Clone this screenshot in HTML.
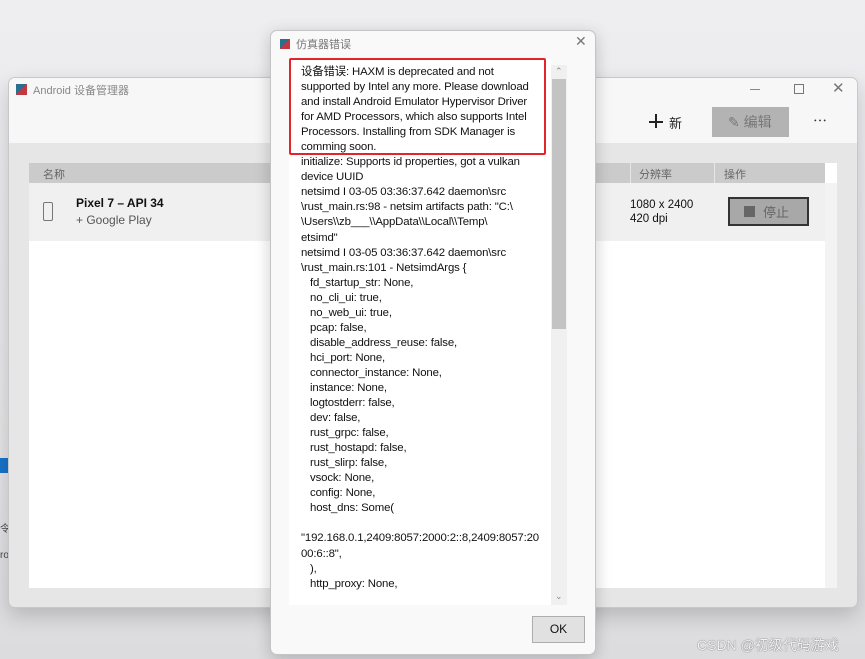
<!DOCTYPE html>
<html><head><meta charset="utf-8"><style>
*{margin:0;padding:0;box-sizing:border-box}
body{width:865px;height:659px;overflow:hidden;background:linear-gradient(#eeeef1,#e6e6e8 60%,#dcdcdf);font-family:"Liberation Sans","Noto Sans CJK SC",sans-serif;position:relative}
.abs{position:absolute}
.win{left:8px;top:77px;width:850px;height:531px;background:#e6e6e6;border:1px solid #c8c8c8;border-radius:7px;box-shadow:0 8px 20px rgba(0,0,0,.18);overflow:hidden}
.top{left:0;top:0;width:850px;height:65px;background:#f7f7f7}
.dlg{left:270px;top:30px;width:326px;height:625px;background:#f9f9f9;border:1px solid #c4c4c4;border-radius:7px;box-shadow:0 4px 16px rgba(0,0,0,.2)}
.txt{left:18px;top:28px;width:262px;height:546px;background:#fff;overflow:hidden}
.lines{position:absolute;left:12px;top:6px;font-size:11.4px;line-height:15.05px;color:#111;white-space:pre;letter-spacing:-0.15px}
</style></head><body>
<div class="abs" style="left:0;top:458px;width:8px;height:15px;background:#1a73c8"></div>
<div class="abs" style="left:0;top:520px;font-size:10px;color:#444">令</div>
<div class="abs" style="left:0;top:550px;font-size:10px;color:#444">ro</div>
<div class="abs win">
 <div class="abs top"></div>
 <div class="abs" style="left:7px;top:6px;width:11px;height:11px;background:linear-gradient(135deg,#2a6f8f 50%,#c3373f 50%)"></div>
 <div class="abs" style="left:24px;top:4px;font-size:11px;color:#888">Android 设备管理器</div>
 <div class="abs" style="left:741px;top:11px;width:10px;height:1px;background:#888"></div>
 <div class="abs" style="left:785px;top:6px;width:10px;height:10px;border:1px solid #777"></div>
 <div class="abs" style="left:823px;top:1px;font-size:15px;color:#777">✕</div>
 <div class="abs" style="left:640px;top:43px;width:14px;height:1.5px;background:#222"></div>
 <div class="abs" style="left:646px;top:36px;width:1.5px;height:14px;background:#222"></div>
 <div class="abs" style="left:660px;top:35px;font-size:13px;color:#222">新</div>
 <div class="abs" style="left:703px;top:29px;width:77px;height:30px;background:#b3b3b3"></div>
 <div class="abs" style="left:719px;top:34px;font-size:14px;color:#777">✎ 编辑</div>
 <div class="abs" style="left:804px;top:33px;font-size:14px;color:#333">⋯</div>
 <div class="abs" style="left:20px;top:85px;width:808px;height:425px;background:#fff"></div>
 <div class="abs" style="left:20px;top:85px;width:796px;height:20px;background:#cbcbcb"></div>
 <div class="abs" style="left:34px;top:88px;font-size:11px;color:#666">名称</div>
 <div class="abs" style="left:621px;top:85px;width:1px;height:20px;background:#e6e6e6"></div>
 <div class="abs" style="left:705px;top:85px;width:1px;height:20px;background:#e6e6e6"></div>
 <div class="abs" style="left:630px;top:88px;font-size:11px;color:#666">分辨率</div>
 <div class="abs" style="left:715px;top:88px;font-size:11px;color:#666">操作</div>
 <div class="abs" style="left:20px;top:105px;width:796px;height:58px;background:#f0f0f0"></div>
 <div class="abs" style="left:34px;top:124px;width:10px;height:19px;border:1px solid #777;border-radius:2px"></div>
 <div class="abs" style="left:67px;top:118px;font-size:12px;font-weight:bold;color:#111">Pixel 7 – API 34</div>
 <div class="abs" style="left:67px;top:135px;font-size:12px;color:#555">+ Google Play</div>
 <div class="abs" style="left:621px;top:120px;font-size:11.5px;color:#111;line-height:14px">1080 x 2400<br>420 dpi</div>
 <div class="abs" style="left:719px;top:119px;width:81px;height:29px;background:#a8a8a8;border:2px solid #333"></div>
 <div class="abs" style="left:735px;top:128px;width:11px;height:11px;background:#666"></div>
 <div class="abs" style="left:754px;top:124px;font-size:13px;color:#666">停止</div>
 <div class="abs" style="left:816px;top:105px;width:12px;height:405px;background:#f3f3f3"></div>
</div>
<div class="abs dlg">
 <div class="abs" style="left:9px;top:8px;width:10px;height:10px;background:linear-gradient(135deg,#2a6f8f 50%,#c3373f 50%)"></div>
 <div class="abs" style="left:25px;top:5px;font-size:11px;color:#777">仿真器错误</div>
 <div class="abs" style="left:304px;top:2px;font-size:14px;color:#777">✕</div>
 <div class="abs txt">
  <div class="lines">设备错误: HAXM is deprecated and not
supported by Intel any more. Please download
and install Android Emulator Hypervisor Driver
for AMD Processors, which also supports Intel
Processors. Installing from SDK Manager is
comming soon.
initialize: Supports id properties, got a vulkan
device UUID
netsimd I 03-05 03:36:37.642 daemon\src
\rust_main.rs:98 - netsim artifacts path: "C:\
\Users\\zb___\\AppData\\Local\\Temp\
etsimd"
netsimd I 03-05 03:36:37.642 daemon\src
\rust_main.rs:101 - NetsimdArgs {
   fd_startup_str: None,
   no_cli_ui: true,
   no_web_ui: true,
   pcap: false,
   disable_address_reuse: false,
   hci_port: None,
   connector_instance: None,
   instance: None,
   logtostderr: false,
   dev: false,
   rust_grpc: false,
   rust_hostapd: false,
   rust_slirp: false,
   vsock: None,
   config: None,
   host_dns: Some(

"192.168.0.1,2409:8057:2000:2::8,2409:8057:20
00:6::8",
   ),
   http_proxy: None,</div>
 </div>
 <div class="abs" style="left:280px;top:34px;width:16px;height:540px;background:#f0f0f0"></div>
 <div class="abs" style="left:281px;top:48px;width:14px;height:250px;background:#c3c3c3"></div>
 <div class="abs" style="left:284px;top:35px;font-size:9px;color:#888">⌃</div>
 <div class="abs" style="left:284px;top:560px;font-size:9px;color:#888">⌄</div>
 <div class="abs" style="left:18px;top:27px;width:257px;height:97px;border:2px solid #e0262c;border-radius:2px"></div>
 <div class="abs" style="left:261px;top:585px;width:53px;height:27px;background:#e1e1e1;border:1px solid #adadad;font-size:12px;color:#111;text-align:center;line-height:25px">OK</div>
</div>
<div class="abs" style="left:697px;top:635px;font-size:14px;color:#f2f2f2;text-shadow:0 0 1px #777,0 0 1px #777">CSDN @初级代码游戏</div>
</body></html>
